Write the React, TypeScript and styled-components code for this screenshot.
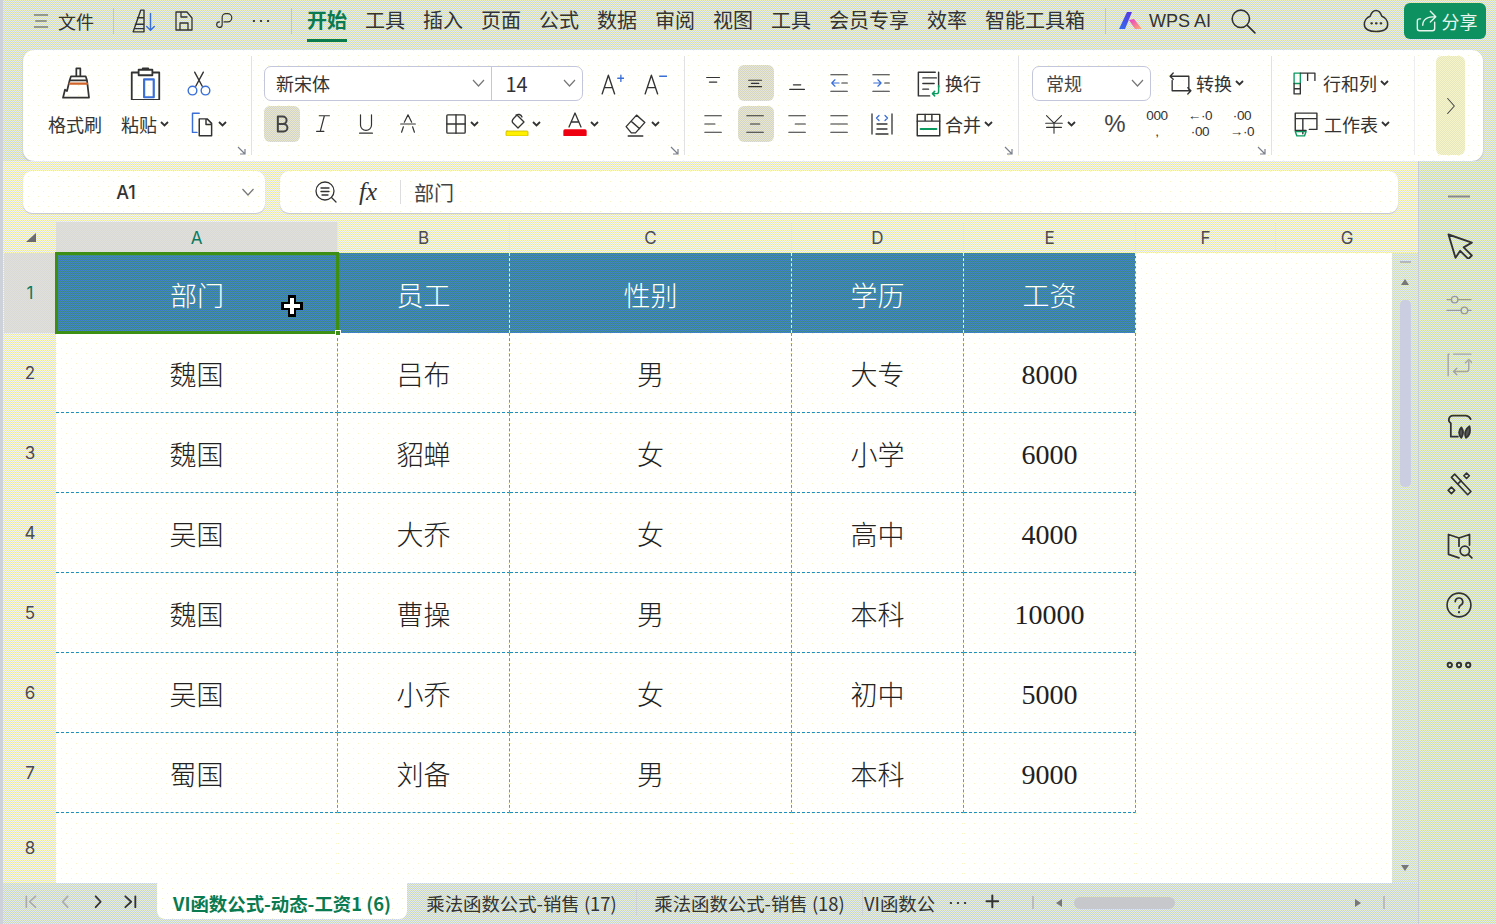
import React from "react";
import styled, { createGlobalStyle, css } from "styled-components";

const dither = (a: string, b: string) => css`
  background-color: ${a};
  background-image:
    conic-gradient(from 270deg at 1px 1px, ${b} 25%, transparent 0),
    conic-gradient(from 270deg at 1px 1px, ${b} 25%, transparent 0);
  background-size: 2px 2px, 2px 2px;
  background-position: 0 0, 1px 1px;
`;
const dots = css`
  background-color: #fffffd;
  background-image:
    conic-gradient(from 270deg at 1px 1px, #f9f8c4 25%, transparent 0),
    conic-gradient(from 270deg at 1px 1px, #f9f8c4 25%, transparent 0);
  background-size: 10px 10px, 10px 10px;
  background-position: 0 0, 5px 5px;
`;
const CN = `"Noto Sans CJK SC", "Noto Sans", sans-serif`;

const Global = createGlobalStyle`
  html, body { margin: 0; padding: 0; width: 1496px; height: 924px; overflow: hidden; }
  * { box-sizing: border-box; }
  body { font-family: ${CN}; color: #333; }
`;

const Page = styled.div`
  width: 1496px; height: 924px; overflow: hidden;
  display: flex; flex-direction: column;
  ${dither("#cdd8ea", "#eef2b8")}
  box-shadow: inset 3px 0 0 #cdd2da;
`;
const TopBar = styled.header`
  height: 50px; flex: none; display: flex; align-items: flex-start; padding: 0 10px 0 33px;
`;
const TopItem = styled.div<{ $ml?: number; $font?: string }>`
  height: 42px; display: flex; align-items: center; justify-content: center; flex: none;
  margin-left: ${p => p.$ml ?? 0}px;
  font-size: 18px; color: #333; white-space: nowrap; font-weight: 400;
  ${p => p.$font ? `font-family: ${p.$font};` : ""}
`;
const TopDivider = styled.div<{ $ml: number }>`
  width: 1px; height: 26px; margin: 8px 0 0 ${p => p.$ml}px; background: #bfc6c8; flex: none;
`;
const Tabs = styled.nav`display: flex; gap: 18px; margin-left: 15px;`;
const TabItem = styled.div<{ $active?: boolean }>`
  height: 42px; display: flex; align-items: center; font-size: 20px; white-space: nowrap;
  color: ${p => p.$active ? "#0a7a50" : "#333"};
  font-weight: ${p => p.$active ? 700 : 400};
  border-bottom: 3px solid ${p => p.$active ? "#0a7a50" : "transparent"};
`;
const Share = styled.button`
  width: 84px; height: 36px; margin: 3px 0 0 14px; border: 0; border-radius: 6px; background: #0d9160; color: #e8f5ee;
  display: flex; align-items: center; justify-content: center; gap: 3px; font: 400 18px ${CN}; padding: 0;
`;

const Ribbon = styled.section`
  height: 111px; flex: none; margin: 0 13px 0 23px; border-radius: 11px; ${dots}
  box-shadow: 0 1px 2px #b8bcc8; display: flex; padding: 6px 0; font-size: 18px;
`;
const Group = styled.div<{ $w: number; $pl: number; $last?: boolean }>`
  width: ${p => p.$w}px; flex: none; padding: 9px 0 0 ${p => p.$pl}px; position: relative;
  display: flex; flex-direction: column; gap: 5px;
  border-right: 1px solid ${p => p.$last ? "#eeeeee" : "#e2e2e2"};
`;
const ToolRow = styled.div`display: flex; height: 36px; align-items: center;`;
const Tool = styled.div<{ $w: number; $start?: number; $active?: boolean; $mx?: number }>`
  width: ${p => p.$w}px; height: 36px; flex: none; display: flex; align-items: center;
  margin: 0 ${p => p.$mx ?? 0}px; gap: 3px; white-space: nowrap;
  justify-content: ${p => p.$start !== undefined ? "flex-start" : "center"};
  ${p => p.$start !== undefined ? `padding-left:${p.$start}px;` : ""}
  border-radius: 6px;
  ${p => p.$active ? dither("#d3d3d0", "#e8e8c8") : ""}
`;
const Corner = styled.svg`position: absolute; right: 5px; bottom: 0; width: 9px; height: 9px;`;
const FontBox = styled.div`
  width: 319px; height: 35px; display: flex; border: 1px solid #c4c6dc; border-radius: 7px; background: #fff;
`;
const FontPart = styled.div<{ $w: number; $big?: boolean }>`
  width: ${p => p.$w}px; display: flex; align-items: center; justify-content: space-between; padding: 0 6px 0 11px;
  font-size: ${p => p.$big ? 20 : 18}px;
  &:first-child { border-right: 1px solid #c4c6dc; }
  &:last-child { padding-left: 14px; }
`;
const SelectBox = styled.div`
  width: 119px; height: 35px; border: 1px solid #c4c6dc; border-radius: 7px; background: #fff; display: flex;
  align-items: center; justify-content: space-between; padding: 0 6px 0 13px; color: #444; font-size: 18px; flex: none;
`;
const Pct = styled.span`font: 400 24px "Liberation Sans", sans-serif; color: #444;`;
const More = styled.div`
  width: 29px; height: 99px; margin-left: 21px; border-radius: 6px; flex: none; ${dither("#e6e6c0", "#f6f5c8")}
  display: flex; align-items: center; justify-content: center;
`;
const RowLabel = styled.span`margin-left: 3px;`;

const Body = styled.div`flex: 1; min-height: 0; display: flex;`;
const Work = styled.main`
  width: 1415px; margin-left: 3px; flex: none; padding-left: 1px; display: flex; flex-direction: column;
  ${dither("#dde0f2", "#fefcb0")}
`;
const SidePanel = styled.aside`
  width: 78px; flex: none; border-left: 1px solid #c8ccd6; display: flex; flex-direction: column; align-items: center;
  padding: 16px 0 0 2px;
  ${dither("#cbd8e4", "#eaf3b0")}
`;
const SideItem = styled.div<{ $h: number }>`height: ${p => p.$h}px; display: flex; align-items: center; justify-content: center;`;

const FormulaRow = styled.div`height: 52px; flex: none; padding: 10px 20px 0 19px; display: flex; gap: 15px;`;
const BoxBase = styled.div`
  height: 42px; border-radius: 9px; box-shadow: 0 1px 1px #c4c6d4; display: flex; align-items: center; ${dots}
`;
const NameBox = styled(BoxBase)`width: 242px; padding: 0 10px; justify-content: space-between;`;
const NameText = styled.span`flex: 1; text-align: center; font: 500 18px Inter, sans-serif; color: #333; padding-right: 22px;`;
const FormulaBox = styled(BoxBase)`flex: 1; padding-left: 34px; font-size: 20px; color: #444;`;
const Fx = styled.span`font: italic 500 25px "Liberation Serif", serif; color: #333; margin-left: 21px; width: 26px;`;
const FxDivider = styled.div`width: 1px; height: 24px; background: #ddd; margin: 0 13px 0 15px;`;

const SheetGrid = styled.div`
  flex: none; margin-top: 9px; width: 1414px; height: 661px; display: grid;
  grid-template-columns: 52px 282px 172px 282px 172px 172px 140px 116px 26px;
  grid-template-rows: 31px repeat(7, 80px) 70px;
`;
const CornerCell = styled.div`display: flex; align-items: center; justify-content: center; padding-left: 2px;`;
const ColHead = styled.div<{ $sel?: boolean; $span?: boolean }>`
  display: flex; align-items: center; justify-content: center; font: 400 17px Inter, sans-serif; padding-top: 1px;
  color: ${p => p.$sel ? "#0a7a60" : "#4a4a55"};
  ${p => p.$span ? "grid-column: span 2;" : "border-right: 1px solid #e6e8d0;"}
  ${p => p.$sel ? dither("#d9d9d9", "#e0e0d8") : ""}
`;
const RowHead = styled.div<{ $sel?: boolean }>`
  display: flex; align-items: center; justify-content: center; font: 400 17px Inter, sans-serif;
  color: ${p => p.$sel ? "#0a7a60" : "#4a4a55"};
  ${p => p.$sel ? dither("#d9d9d9", "#e0e0d8") : ""}
`;
const Cell = styled.div<{ $head?: boolean; $blank?: boolean; $num?: boolean; $sel?: boolean }>`
  position: relative; display: flex; align-items: center; justify-content: center;
  padding-top: ${p => p.$num ? 4 : 2}px;
  font-family: "Liberation Serif", "Noto Sans CJK SC", serif;
  font-size: ${p => p.$num ? 28 : 27}px; font-weight: 300;
  color: ${p => p.$head ? "#fff" : "#222"};
  ${p => p.$head ? dither("#3a7cc4", "#458f90") : dots}
  ${p => p.$blank ? "" : p.$head ? css`
    border-right: 1px dashed #e8f4f4;
    ` : css`
    border-right: 1px dashed #5a9cc0;
    border-bottom: 1px dashed #1a8fc0;
  `}
  ${p => p.$sel ? css`
    outline: 3px solid #3c8f12; outline-offset: -2px; z-index: 2; border-right: 0;
  ` : ""}
`;
const Handle = styled.span`
  position: absolute; right: -3px; bottom: -3px; width: 6px; height: 6px; background: #3c8f12; border: 1px solid #fff;
`;
const Pointer = styled.svg`position: absolute; left: 224px; top: 41px; width: 24px; height: 24px;`;

const VScroll = styled.div`
  grid-column: 9; grid-row: 2 / span 8;
  display: flex; flex-direction: column; align-items: center; position: relative;
  ${dither("#cdd8e8", "#e8f0c0")}
`;
const VDash = styled.div`width: 11px; height: 2px; background: #b4b8bc; margin-top: 8px;`;
const VThumb = styled.div`width: 11px; height: 187px; border-radius: 5px; background: #cbcde0; margin-top: 15px;`;
const Arrow = styled.div<{ $dir: "up" | "down" | "left" | "right" }>`
  flex: none; width: 0; height: 0;
  ${p => p.$dir === "up" && "border: 4px solid transparent; border-top: 0; border-bottom: 6px solid #777; margin-top: 16px;"}
  ${p => p.$dir === "down" && "border: 4px solid transparent; border-bottom: 0; border-top: 6px solid #777; position:absolute; bottom: 12px;"}
  ${p => p.$dir === "left" && "border: 4px solid transparent; border-left: 0; border-right: 6px solid #777;"}
  ${p => p.$dir === "right" && "border: 4px solid transparent; border-right: 0; border-left: 6px solid #777;"}
`;

const SheetBar = styled.footer`
  margin-left: -1px; width: 1415px; height: 41px; flex: none; display: flex; align-items: flex-start;
  font-size: 18.4px; color: #333;
  ${dither("#c8d4e6", "#e6efc8")}
`;
const Nav = styled.div`width: 154px; flex: none; height: 40px; padding-left: 13px; display: flex; align-items: center;`;
const NavCell = styled.div`width: 33px; display: flex; justify-content: center;`;
const SheetTab = styled.div<{ $active?: boolean; $w: number }>`
  width: ${p => p.$w}px; height: ${p => p.$active ? 36 : 40}px; flex: none; display: flex; align-items: center; justify-content: center;
  white-space: nowrap; padding: ${p => p.$active ? "4px 0 0" : "0 0 1px"};
  ${p => p.$active ? css`
    ${dots} border-radius: 0 0 8px 8px; color: #0a7a50; font-weight: 700;
  ` : ""}
`;
const TabCut = styled.div`width: 70px; height: 40px; flex: none; white-space: nowrap; display: flex; align-items: center; margin-left: 1px; padding-bottom: 1px;`;
const VBar = styled.div<{ $ml: number }>`width: 2px; height: 13px; background: #bbb; margin: 13px 0 0 ${p => p.$ml}px; flex: none;`;
const TabDivider = styled.div`width: 1px; height: 26px; margin-top: 7px; background: #cdd2d6; flex: none;`;
const BarIcon = styled.div<{ $ml: number }>`margin: 0 0 0 ${p => p.$ml}px; height: 40px; display: flex; align-items: center; flex: none;`;
const HThumb = styled.div`width: 101px; height: 12px; border-radius: 6px; background: #c6c8cc; margin: 14px 0 0 12px; flex: none;`;

type IP = { s?: number; c?: string };
const S = styled.svg`display: block; flex: none;`;
const I = ({ s = 24, children, c = "#333", sw = 1.3 }: IP & { children: React.ReactNode; sw?: number }) => (
  <S width={s} height={s} viewBox="0 0 24 24" fill="none" stroke={c} strokeWidth={sw} strokeLinecap="round" strokeLinejoin="round">{children}</S>
);
const B = "#3a6fd8";
const Caret = () => <S width={9} height={6} viewBox="0 0 9 6" fill="none" stroke="#333" strokeWidth="1.8"><path d="M1 1l3.500 3.500L8 1" /></S>;
const Chev = ({ w = 13 }: { w?: number }) => <S width={w} height={8} viewBox="0 0 13 8" fill="none" stroke="#777" strokeWidth="1.2"><path d="M1 1l5.500 6L12 1" /></S>;
const CornerMark = () => (
  <Corner viewBox="0 0 9 9" fill="none" stroke="#7a7f8a" strokeWidth="1.2"><path d="M1 1l7 7M8 3v5H3" /></Corner>
);
const Lines = ({ y }: { y: [number, number, number][] }) => (
  <I s={22}>{y.map(([a, b, yy], i) => <path key={i} d={`M${a} ${yy}H${b}`} />)}</I>
);

const Icons = {
  menu: <I s={16}><path d="M2 3h20M4 12h16M2 21h20" /></I>,
  sort: <I s={26}><path d="M9 2h3v20H2zM4 15h8M3 19h9M6 9h6" /><path d="M18 5v15M14.500 17l3.500 3.500 3.500-3.500" stroke={B} /></I>,
  save: <I s={24}><path d="M4 3h11l5 6v12H4zM9 3v5h6M8 21v-7h8v7" /></I>,
  link: <I s={22}><path d="M12 13h4a4 4 0 0 0 0-9h-2a4 4 0 0 0-4 4v8a3 3 0 0 1-6 0 3 3 0 0 1 3-3" /></I>,
  dots: <I s={22}><path d="M4 12h.6M11.700 12h.6M19.400 12h.6" strokeWidth="2" /></I>,
  search: <I s={26} sw={1.5}><circle cx="10" cy="10" r="8" /><path d="M16 16l7 7" /></I>,
  cloud: <I s={28}><path d="M12 3c3 0 4 2 5 5 3 1 5 4 5 7 0 4-4 6-10 6S2 19 2 15c0-3 2-6 5-7 1-3 2-5 5-5z" /><path d="M8 14h.5M12 14h.5M16 14h.5" strokeWidth="1.8" /></I>,
  share: <I s={26} c="#e8f5ee"><path d="M20 13v6a2 2 0 0 1-2 2H6a2 2 0 0 1-2-2v-7a2 2 0 0 1 2-2h1" /><path d="M9 16c0-5 3-8 12-8M16 3l5 5-5 5" /></I>,
  logo: (
    <S width={24} height={20} viewBox="0 0 24 20">
      <defs>
        <linearGradient id="lg1" x1="0" y1="1" x2="1" y2="0"><stop offset="0" stopColor="#2f6ff0" /><stop offset="1" stopColor="#5a34e0" /></linearGradient>
        <linearGradient id="lg2" x1="0" y1="0" x2="1" y2="1"><stop offset="0" stopColor="#e838c8" /><stop offset="1" stopColor="#ffb070" /></linearGradient>
      </defs>
      <path d="M8 1h5L6 18H0z" fill="url(#lg1)" />
      <path d="M10 9l5-1 8 10h-7z" fill="url(#lg2)" />
    </S>
  ),
  brush: <I s={32}><path d="M13 1h3v6h-3zM9 7h11l1 3H8zM8 10h13l1.500 13H3l1.500-6 1.500 1z" /><path d="M8 12.500h13" stroke="#d0642a" strokeWidth="1.6" /></I>,
  paste: <I s={33}><path d="M7 4H2v20h20V4h-5M7 2h10v4H7zM10 2V1h4v1" /><rect x="11" y="9" width="7" height="13" stroke={B} strokeWidth="1.6" /></I>,
  cut: <I s={26}><path d="M8 2l7 13M16 2L9 15" /><circle cx="6" cy="19" r="4" stroke={B} /><circle cx="18" cy="19" r="4" stroke={B} /></I>,
  copy: <I s={27}><path d="M10 2H4v17h4" stroke={B} /><path d="M10 7h7l4 4v11H10zM16 7v5h5" /></I>,
  aUp: <I s={25}><path d="M3 22L9 4l6 18M5 16h8" /><path d="M18 7h6M21 4v6" stroke={B} /></I>,
  aDown: <I s={25}><path d="M3 22L9 4l6 18M5 16h8" /><path d="M17 5h7" stroke={B} /></I>,
  bold: <I s={20} sw={2.4} c="#444"><path d="M7 3h6a4 4 0 0 1 0 9H7zM7 12h7a4.500 4.500 0 0 1 0 9H7z" /></I>,
  italic: <I s={22}><path d="M8 3h11M5 20h8M13.500 3L9 20" /></I>,
  under: <I s={22}><path d="M6 2v11a6 6 0 0 0 12 0V2M5 22h14" /></I>,
  strike: <I s={22}><path d="M8 10l4-8 4 8M4 12h16M7 15l-2 6M17 15l2 6" /></I>,
  border: <I s={22} sw={1.5}><rect x="2" y="2" width="20" height="20" rx="1" /><path d="M2 12h20M12 2v20" /></I>,
  fill: (
    <I s={24}><path d="M9 6l3-3 7 7-6 6-5-5c-1-1-1-3 1-5zM11 3c2-1 5-1 6 2" /><rect x="1" y="19" width="22" height="5" rx="1" fill="#ffef00" stroke="#c9b900" strokeWidth=".8" /></I>
  ),
  color: <I s={24}><path d="M6 15l6-14 6 14M8 10h8" /><rect x="1" y="18" width="22" height="6" rx="1" fill="#ee0011" stroke="#ee0011" /></I>,
  erase: <I s={25}><path d="M3 14L13 3l8 7-9 10H8zM8 9l8 7M5 23h14" /></I>,
  indentL: <I s={22}><path d="M2 3h18M2 21h18" /><path d="M11 12H3M6.500 8.500L3 12l3.500 3.500" stroke={B} /><path d="M14 12h6" /></I>,
  indentR: <I s={22}><path d="M2 3h18M2 21h18M15 12h5" /><path d="M3 12h8M7.500 8.500L11 12l-3.500 3.500" stroke={B} /></I>,
  dist: <I s={24}><path d="M2 2v20M22 2v20M6 22h12M7 17h10M7 12h10" /><path d="M9 3.500L6.500 6 9 8.500M15 3.500L17.500 6 15 8.500" stroke={B} /></I>,
  wrap: <I s={27}><path d="M18 2H3v21h10M7 7h12M7 12h10M7 17h5M21 2v13" /><path d="M21 14v5a2 2 0 0 1-2 2h-3M17.500 19L15.500 21l2 2" stroke="#0a9a60" /></I>,
  merge: <I s={27}><rect x="2" y="3" width="20" height="19" /><path d="M2 9h20M9 3v6M15 3v6" /><path d="M5 16h14" stroke="#0a9a60" strokeWidth="1.8" /></I>,
  convert: <I s={25}><path d="M5 2l-3 3 3 3M2 5h18v13M19 22l3-3-3-3M22 19H4V9" /></I>,
  rowcol: <I s={25}><rect x="2" y="2" width="6" height="10" stroke="#0a9a60" /><path d="M8 2h14v7M15 2v7M2 12v10h6V12M2 17h6" /></I>,
  sheet: <I s={26}><path d="M3 2h20v15h-7M3 2v16M3 7h20M10 7v14M3 18h10" /><path d="M3 19h10l-1.500 4H4.500z" stroke="#0a9a60" /></I>,
  yen: <I s={20}><path d="M3 2l9 9 9-9M2 11h20M3 16h18M12 11v12" /></I>,
  zoom: <I s={24}><circle cx="11" cy="11" r="9" /><path d="M7 8h8M7 11.500h8M8 15h6M17.500 17.500L22 22" /></I>,
  cursor: <I s={28} sw={1.6}><path d="M3 3l20 7-7 4 7 7-3 3-7-7-4 6z" /></I>,
  slide: <I s={26} c="#999"><circle cx="8" cy="7" r="3" /><circle cx="17" cy="17" r="3" /><path d="M1 7h4M11 7h12M1 17h13M20 17h3" /></I>,
  flow: <I s={26} c="#a4a4a4"><path d="M2 2v20M7 2h16M2 2h1" /><path d="M21 9v7a2 2 0 0 1-2 2H8M10 15l-3 3 3 3M18 10l3-3 3 3" /></I>,
  leaf: <I s={28} sw={1.5}><path d="M22 7a5 5 0 0 0-4-3H7a3.500 3.500 0 0 0-2 6.500V22h6" /><path d="M14 23c-3-3-2-7 0-9 2 3 2 6 0 9zM18 23c-2-4 0-8 3-10 1 4 0 8-3 10z" fill="#555" /></I>,
  magic: <I s={26} sw={1.5}><path d="M5 5l3-3 15 16-3 3zM11 11l3-3" /><path d="M19 1l2.500 2.500L19 6l-2.500-2.500zM5 14l3 3-3 3-3-3z" /></I>,
  book: <I s={28} sw={1.5}><path d="M3 3l9 3 9-3v9M12 6v7M3 3v17l9 3" /><circle cx="17" cy="17" r="4" /><path d="M20 20l3 3" /></I>,
  help: <I s={26} sw={1.5}><circle cx="12" cy="12" r="11" /><path d="M8.500 9a3.500 3.500 0 1 1 5 3.200c-1 .6-1.500 1.300-1.500 2.800" /><path d="M12 18.500v.3" strokeWidth="2" /></I>,
  more: <I s={26} sw={1.8}><circle cx="3.500" cy="12" r="2" /><circle cx="12" cy="12" r="2" /><circle cx="20.500" cy="12" r="2" /></I>,
  right: <I s={20} c="#444"><path d="M8 3l8 9-8 9" /></I>,
  first: <I s={20} c="#aaa" sw={2}><path d="M4 4v13M15 4l-7 6.500 7 6.500" /></I>,
  prev: <I s={20} c="#aaa" sw={2}><path d="M14 4l-6 6.500 6 6.500" /></I>,
  next: <I s={20} sw={2.2}><path d="M8 4l6 6.500-6 6.500" /></I>,
  last: <I s={20} sw={2.2}><path d="M4 4l7 6.500-7 6.500M16 4v13" /></I>,
  plus: <I s={20} sw={2.4}><path d="M10 3v14M3 10h14" /></I>,
};

const Tiny = styled.div`font: 400 13.5px/16px "Liberation Sans", sans-serif; color: #333; display: flex; flex-direction: column; align-items: center; width: 26px; letter-spacing: -.3px;`;
const TinyRow = styled.span`white-space: nowrap;`;

const TOP = ["工具", "插入", "页面", "公式", "数据", "审阅", "视图", "工具", "会员专享", "效率", "智能工具箱"];
const COLS = ["A", "B", "C", "D", "E", "F"];
const ROWS = [
  ["魏国", "吕布", "男", "大专", "8000"],
  ["魏国", "貂蝉", "女", "小学", "6000"],
  ["吴国", "大乔", "女", "高中", "4000"],
  ["魏国", "曹操", "男", "本科", "10000"],
  ["吴国", "小乔", "女", "初中", "5000"],
  ["蜀国", "刘备", "男", "本科", "9000"],
];
const HEAD = ["部门", "员工", "性别", "学历", "工资"];

export default function App() {
  return (
    <Page>
      <Global />
      <TopBar>
        <TopItem>{Icons.menu}</TopItem>
        <TopItem $ml={9}>文件</TopItem>
        <TopDivider $ml={19} />
        <TopItem $ml={17}>{Icons.sort}</TopItem>
        <TopItem $ml={15}>{Icons.save}</TopItem>
        <TopItem $ml={17}>{Icons.link}</TopItem>
        <TopItem $ml={15}>{Icons.dots}</TopItem>
        <TopDivider $ml={19} />
        <Tabs>
          <TabItem $active>开始</TabItem>
          {TOP.map((t, i) => <TabItem key={i}>{t}</TabItem>)}
        </Tabs>
        <TopDivider $ml={20} />
        <TopItem $ml={13}>{Icons.logo}</TopItem>
        <TopItem $ml={6} $font={`"Liberation Sans", sans-serif`}>WPS AI</TopItem>
        <TopItem $ml={19}>{Icons.search}</TopItem>
        <TopItem $ml={106}>{Icons.cloud}</TopItem>
        <Share>{Icons.share}分享</Share>
      </TopBar>

      <Ribbon>
        <Group $w={229} $pl={17}>
          <ToolRow>
            <Tool $w={70}>{Icons.brush}</Tool>
            <Tool $w={70}>{Icons.paste}</Tool>
            <Tool $w={38}>{Icons.cut}</Tool>
          </ToolRow>
          <ToolRow>
            <Tool $w={70}>格式刷</Tool>
            <Tool $w={70}>粘贴<Caret /></Tool>
            <Tool $w={56} $start={8}>{Icons.copy}<Caret /></Tool>
          </ToolRow>
          <CornerMark />
        </Group>
        <Group $w={433} $pl={12}>
          <ToolRow>
            <FontBox>
              <FontPart $w={228}>新宋体<Chev /></FontPart>
              <FontPart $w={91} $big>14<Chev /></FontPart>
            </FontBox>
            <Tool $w={56}>{Icons.aUp}</Tool>
            <Tool $w={30}>{Icons.aDown}</Tool>
          </ToolRow>
          <ToolRow>
            <Tool $w={36} $active>{Icons.bold}</Tool>
            <Tool $w={46}>{Icons.italic}</Tool>
            <Tool $w={40}>{Icons.under}</Tool>
            <Tool $w={44}>{Icons.strike}</Tool>
            <Tool $w={63}>{Icons.border}<Caret /></Tool>
            <Tool $w={59}>{Icons.fill}<Caret /></Tool>
            <Tool $w={58}>{Icons.color}<Caret /></Tool>
            <Tool $w={62}>{Icons.erase}<Caret /></Tool>
          </ToolRow>
          <CornerMark />
        </Group>
        <Group $w={334} $pl={8}>
          <ToolRow>
            <Tool $w={36} $mx={3}><Lines y={[[4, 18, 6], [7, 15, 11]]} /></Tool>
            <Tool $w={36} $mx={3} $active><Lines y={[[4, 18, 9], [7, 15, 12.5], [4, 18, 16]]} /></Tool>
            <Tool $w={36} $mx={3}><Lines y={[[7, 15, 14], [3, 19, 19]]} /></Tool>
            <Tool $w={36} $mx={3}>{Icons.indentL}</Tool>
            <Tool $w={36} $mx={3}>{Icons.indentR}</Tool>
            <Tool $w={88} $start={12}>{Icons.wrap}换行</Tool>
          </ToolRow>
          <ToolRow>
            <Tool $w={36} $mx={3}><Lines y={[[2, 20, 3], [2, 13, 12], [2, 20, 21]]} /></Tool>
            <Tool $w={36} $mx={3} $active><Lines y={[[2, 20, 3], [6, 16, 12], [2, 20, 21]]} /></Tool>
            <Tool $w={36} $mx={3}><Lines y={[[2, 20, 3], [9, 20, 12], [2, 20, 21]]} /></Tool>
            <Tool $w={36} $mx={3}><Lines y={[[2, 20, 3], [2, 20, 12], [2, 20, 21]]} /></Tool>
            <Tool $w={36} $mx={3}>{Icons.dist}</Tool>
            <Tool $w={100} $start={12}>{Icons.merge}合并<Caret /></Tool>
          </ToolRow>
          <CornerMark />
        </Group>
        <Group $w={253} $pl={13}>
          <ToolRow>
            <SelectBox>常规<Chev /></SelectBox>
            <Tool $w={100} $start={17}>{Icons.convert}转换<Caret /></Tool>
          </ToolRow>
          <ToolRow>
            <Tool $w={55}>{Icons.yen}<Caret /></Tool>
            <Tool $w={56}><Pct>%</Pct></Tool>
            <Tool $w={28}><Tiny><TinyRow>000</TinyRow><TinyRow>,</TinyRow></Tiny></Tool>
            <Tool $w={58}><Tiny><TinyRow>←·0</TinyRow><TinyRow>·00</TinyRow></Tiny></Tool>
            <Tool $w={26}><Tiny><TinyRow>·00</TinyRow><TinyRow>→·0</TinyRow></Tiny></Tool>
          </ToolRow>
          <CornerMark />
        </Group>
        <Group $w={143} $pl={20} $last>
          <ToolRow>
            <Tool $w={120} $start={0}>{Icons.rowcol}<RowLabel>行和列</RowLabel><Caret /></Tool>
          </ToolRow>
          <ToolRow>
            <Tool $w={120} $start={0}>{Icons.sheet}<RowLabel>工作表</RowLabel><Caret /></Tool>
          </ToolRow>
        </Group>
        <More>{Icons.right}</More>
      </Ribbon>

      <Body>
        <Work>
          <FormulaRow>
            <NameBox><NameText>A1</NameText><Chev w={14} /></NameBox>
            <FormulaBox>
              {Icons.zoom}
              <Fx>fx</Fx>
              <FxDivider />
              部门
            </FormulaBox>
          </FormulaRow>
          <SheetGrid>
            <CornerCell>
              <S width={10} height={9} viewBox="0 0 10 9"><path d="M10 0v9H0z" fill="#6a6a70" /></S>
            </CornerCell>
            {COLS.map((c, i) => <ColHead key={c} $sel={i === 0}>{c}</ColHead>)}
            <ColHead $span>G</ColHead>
            <VScroll>
              <VDash />
              <Arrow $dir="up" />
              <VThumb />
              <Arrow $dir="down" />
            </VScroll>
            <RowHead $sel>1</RowHead>
            {HEAD.map((h, i) => (
              <Cell key={h} $head $sel={i === 0}>
                {h}
                {i === 0 && (
                  <>
                    <Handle />
                    <Pointer viewBox="0 0 24 24">
                      <path d="M8 1h8v7h7v8h-7v7H8v-7H1V8h7z" fill="#000" />
                      <path d="M10 4h4v6h6v4h-6v6h-4v-6H4v-4h6z" fill="#fff" />
                    </Pointer>
                  </>
                )}
              </Cell>
            ))}
            <Cell $blank /><Cell $blank />
            {ROWS.map((r, ri) => (
              <React.Fragment key={ri}>
                <RowHead>{ri + 2}</RowHead>
                {r.map((v, ci) => <Cell key={ci} $num={ci === 4}>{v}</Cell>)}
                <Cell $blank /><Cell $blank />
              </React.Fragment>
            ))}
            <RowHead>8</RowHead>
            {[0, 1, 2, 3, 4, 5, 6].map(k => <Cell key={k} $blank />)}
          </SheetGrid>
          <SheetBar>
            <Nav>
              <NavCell>{Icons.first}</NavCell>
              <NavCell>{Icons.prev}</NavCell>
              <NavCell>{Icons.next}</NavCell>
              <NavCell>{Icons.last}</NavCell>
            </Nav>
            <SheetTab $active $w={250}>VI函数公式-动态-工资1 (6)</SheetTab>
            <SheetTab $w={229}>乘法函数公式-销售 (17)</SheetTab>
            <TabDivider />
            <SheetTab $w={225}>乘法函数公式-销售 (18)</SheetTab>
            <TabDivider />
            <TabCut>VI函数公</TabCut>
            <BarIcon $ml={13}>{Icons.dots}</BarIcon>
            <BarIcon $ml={15}>{Icons.plus}</BarIcon>
            <VBar $ml={28} />
            <BarIcon $ml={22}><Arrow $dir="left" /></BarIcon>
            <HThumb />
            <BarIcon $ml={180}><Arrow $dir="right" /></BarIcon>
            <VBar $ml={22} />
          </SheetBar>
        </Work>
        <SidePanel>
          <SideItem $h={38}><S width={22} height={3} viewBox="0 0 22 3"><path d="M0 1.500h22" stroke="#8a8a80" strokeWidth="2" /></S></SideItem>
          <SideItem $h={60}>{Icons.cursor}</SideItem>
          <SideItem $h={60}>{Icons.slide}</SideItem>
          <SideItem $h={60}>{Icons.flow}</SideItem>
          <SideItem $h={60}>{Icons.leaf}</SideItem>
          <SideItem $h={60}>{Icons.magic}</SideItem>
          <SideItem $h={60}>{Icons.book}</SideItem>
          <SideItem $h={60}>{Icons.help}</SideItem>
          <SideItem $h={60}>{Icons.more}</SideItem>
        </SidePanel>
      </Body>
    </Page>
  );
}
